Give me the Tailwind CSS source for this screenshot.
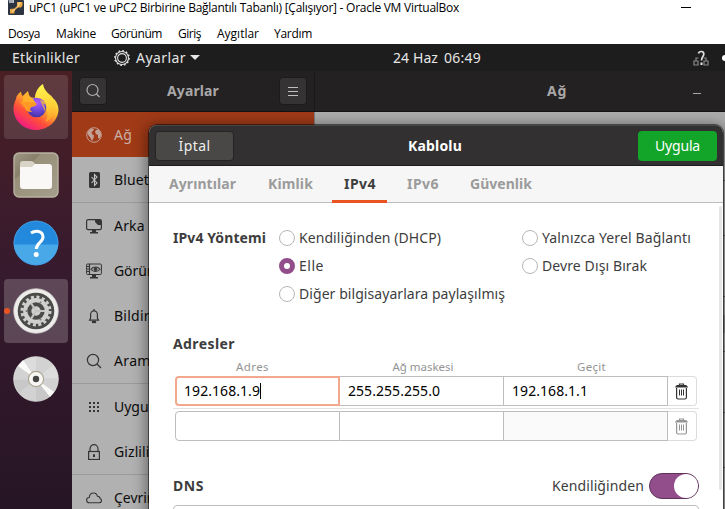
<!DOCTYPE html>
<html lang="tr">
<head>
<meta charset="utf-8">
<title>uPC1 - Oracle VM VirtualBox</title>
<script src="https://cdn.jsdelivr.net/npm/@tailwindcss/browser@4"></script>
</head>
<body class="w-[725px] h-[509px] overflow-hidden bg-white">
<div class="relative flex flex-col w-[725px] h-[509px] overflow-hidden whitespace-nowrap font-['Noto_Sans',sans-serif] text-[14px] leading-[20px]">

  <!-- Host window title and menu -->
  <header class="shrink-0 h-[44px] bg-white text-black font-['Open_Sans',sans-serif] text-[12px] leading-[16px]">
    <div class="flex h-[24px] pl-[8px]">
      <svg class="w-[16px] h-[15px] shrink-0" viewBox="0 0 16 15"><rect width="16" height="15" rx="1" fill="#2b3440"/><path d="M1 0h5v3H1z" fill="#c4cbd4"/><path d="M2 0v3M4 0v3" stroke="#66707c" stroke-width=".7"/><path d="M14.500 2H9v4L6.500 8.500 2 9v4.500h4.500v-3L10 7.500h3l1.500-2z" fill="#e9a443"/><path d="M10 2.500h4l-2 1.500-1 2.500-3 2-2 3H3L5.500 9.500 8 8.500l1.500-2z" fill="#f8cf83"/></svg>
      <span class="ml-[5px]" data-w="430">uPC1 (uPC1 ve uPC2 Birbirine Bağlantılı Tabanlı) [Çalışıyor] - Oracle VM VirtualBox</span>
      <i class="block ml-auto mr-[34px] mt-[7px] w-[10px] h-px bg-black"></i>
    </div>
    <nav class="flex h-[20px] pl-[8px] pt-[2px]">
      <span class="w-[48px]"><span data-w="32">Dosya</span></span>
      <span class="w-[55px]"><span data-w="40">Makine</span></span>
      <span class="w-[67px]"><span data-w="51">Görünüm</span></span>
      <span class="w-[39px]"><span data-w="23">Giriş</span></span>
      <span class="w-[57px]"><span data-w="42">Aygıtlar</span></span>
      <span data-w="38">Yardım</span>
    </nav>
  </header>

  <!-- GNOME top bar -->
  <div class="shrink-0 flex items-center h-[27px] pl-[12px] pr-0 bg-[#1d1d1d] text-[#e6e6e6]">
    <span data-w="68">Etkinlikler</span>
    <svg class="ml-[34px] w-[16px] h-[16px]" viewBox="0 0 16 16" fill="none" stroke="#e2e2e2"><circle cx="8" cy="8" r="7.200" stroke-width="1.400" stroke-dasharray="1.700 2.070"/><circle cx="8" cy="8" r="6.500" stroke-width="1.100"/><circle cx="8" cy="8" r="4.400" stroke-width="1.100"/></svg>
    <span class="ml-[6px]" data-w="50">Ayarlar</span>
    <svg class="ml-[4px] w-[10px] h-[5px]" viewBox="0 0 10 5"><path d="M0 0h10L5 5z" fill="#e6e6e6"/></svg>
    <span class="ml-[193px]" data-w="45">24 Haz</span>
    <span class="ml-[6px]" data-w="37">06:49</span>
    <svg class="ml-auto w-[16px] h-[16px]" viewBox="0 0 16 16" fill="none"><path d="M1 11h4v4H1zM11 11h4v4h-4zM3 11V8h2.500M13 11V8h-2.500" stroke="#8a8a8a" stroke-width="1.200"/><path d="M5.500 3.500C6 .8 10.800.7 10.800 3.900 10.800 6.500 8.500 6.500 8.500 10.500" stroke="#e0e0e0" stroke-width="1.700"/><rect x="7.500" y="12.500" width="2" height="2.500" fill="#eee"/></svg>
    <i class="block ml-[13px] w-[3px] h-[6px] rounded-l-full bg-white"></i>
  </div>

  <div class="flex flex-1 min-h-0">
    <!-- Dock -->
    <aside class="relative shrink-0 w-[72px] flex flex-col gap-[4px] pt-[4px] px-[4px] bg-linear-to-b from-[#4a2024] via-[#371a2e] via-45% to-[#261525]">
      <div class="shrink-0 size-[64px] rounded-[4px] bg-white/12 flex items-center justify-center">
        <svg class="w-[46px] h-[48px]" viewBox="0 0 46 48">
          <defs>
            <linearGradient id="fa" x1=".85" y1=".1" x2=".2" y2=".95"><stop offset="0" stop-color="#fff04a"/><stop offset=".35" stop-color="#ffb02e"/><stop offset=".65" stop-color="#ff5038"/><stop offset="1" stop-color="#f0148c"/></linearGradient>
            <radialGradient id="fb" cx=".55" cy=".25" r=".8"><stop offset="0" stop-color="#b25cf8"/><stop offset=".5" stop-color="#7049dd"/><stop offset="1" stop-color="#3f2f9c"/></radialGradient>
            <linearGradient id="fc" x1=".5" y1="0" x2=".6" y2="1"><stop offset="0" stop-color="#fff44f"/><stop offset=".6" stop-color="#ffcf36"/><stop offset="1" stop-color="#ff9a2c"/></linearGradient>
          </defs>
          <path d="M3 16C3 13 6 10 8 8.500c.2 2 .8 3.500 1.700 4.500L15 8c.2 2.500 1 5 3 6.500L41 16c3 3 4.500 7 4.500 11C45 38 35 47 23 47S.5 37.500.5 26c0-4 1-7 2.500-10z" fill="url(#fa)"/>
          <path d="M22 15C22 9 26 3 30 1c.5 4 3 7.500 6.500 10.500C41 15 43 19 42.500 25c-.8 8-5 12-10 14 3-5 2-12 0-15-3-5-10-4-10.500-9z" fill="url(#fc)"/>
          <circle cx="23.500" cy="24.500" r="9.800" fill="url(#fb)"/>
          <path d="M7 19c5-2 10-1 12.500 0 3 1 4.500 1 4 2.500-.5 2-5 2-6 3.500-1 2 0 3 2 4-4 .5-6-1-7-3-1-2-3-4-5.500-7z" fill="#ff9a25"/>
          <path d="M10 15c1.500-2 3-4 5-6 .2 2 1 4 3 5.500 2 1 3 3 5 6-4-1.500-8-2-13-1.500z" fill="#ffb12c"/>
          <path d="M27 17c4 0 6 3 6 5-1-.8-2-1-3-1 2 2 2.500 5 2 8" fill="#ffc536" opacity=".7"/>
        </svg>
      </div>
      <div class="shrink-0 size-[64px] flex items-center justify-center">
        <svg class="size-[46px]" viewBox="0 0 46 46"><defs><linearGradient id="fl" x1="0" y1="0" x2="1" y2="1"><stop offset="0" stop-color="#a09985"/><stop offset=".3" stop-color="#877f6a"/><stop offset=".32" stop-color="#989079"/><stop offset="1" stop-color="#a59e8b"/></linearGradient></defs><rect x="1" y="1" width="44" height="44" rx="5" fill="url(#fl)" stroke="#b9b3a2" stroke-width="1.400"/><path d="M7 12q0-3 3-3h8q2 0 3 1.500L23 13v5H7z" fill="#d8d4c8"/><path d="M7 15h12l3-3h14q3 0 3 3v19q0 3-3 3H10q-3 0-3-3z" fill="#f9f8f6"/></svg>
      </div>
      <div class="shrink-0 size-[64px] flex items-center justify-center">
        <svg class="size-[46px]" viewBox="0 0 46 46"><circle cx="23" cy="23" r="22.300" fill="#2389dd"/><path d="M.8 24.500a22.300 22.300 0 0 0 44.400 0z" fill="#48a8e8"/><circle cx="23" cy="23" r="22" fill="none" stroke="#4ba3e4" stroke-width=".8"/><path d="M18 13c4.500-3 12-2.500 12 4 0 5.500-6.700 6-6.700 12" fill="none" stroke="#fff" stroke-width="3"/><circle cx="23.200" cy="34.500" r="2.500" fill="#fff"/></svg>
      </div>
      <div class="shrink-0 size-[64px] rounded-[4px] bg-white/20 flex items-center justify-center relative">
        <i class="absolute left-0 top-[29px] size-[6px] rounded-full bg-[#ea5420]"></i>
        <svg class="size-[46px]" viewBox="0 0 46 46"><circle cx="23" cy="23" r="22.300" fill="#eeecea" stroke="#d2d0ce" stroke-width=".7"/><circle cx="23" cy="23" r="18.300" fill="#4b4b49"/><circle cx="23" cy="23" r="14" fill="none" stroke="#cfcfcd" stroke-width="3" stroke-dasharray="3 2.498"/><circle cx="23" cy="23" r="10.800" fill="none" stroke="#d0d0ce" stroke-width="4.200"/><circle cx="23" cy="23" r="7.500" fill="#4b4b49"/><circle cx="23" cy="23" r="4.700" fill="#d0d0ce"/><path d="M23 23h9M23 23l-5-8M23 23l-5 8" stroke="#c4c4c2" stroke-width="2.200"/><circle cx="27.500" cy="14.500" r="1" fill="#777"/><circle cx="13.500" cy="23" r="1" fill="#777"/><circle cx="27.500" cy="31.500" r="1" fill="#777"/></svg>
      </div>
      <div class="shrink-0 size-[64px] flex items-center justify-center">
        <svg class="size-[46px]" viewBox="0 0 46 46"><circle cx="23" cy="23" r="22.300" fill="#d2d2d2" stroke="#e4e4e2" stroke-width=".8"/><path d="M23 23V1a22 22 0 0 0-14 5zM23 23l22-1A22 22 0 0 0 40 9z" fill="#dcdcdc"/><path d="M23 23V45a22 22 0 0 0 14-5zM23 23L1 24a22 22 0 0 0 5 13z" fill="#c8c8c8"/><path d="M23 23L5 10l5-6zM23 23l18 13-4 5z" fill="#fafaf8"/><circle cx="23" cy="23" r="7.600" fill="#f7f6f3" stroke="#aaa391" stroke-width="1.100"/><circle cx="23" cy="23" r="3.200" fill="#454545"/></svg>
      </div>
    </aside>

    <!-- Settings window -->
    <section class="flex flex-col flex-1 min-w-0">
      <div class="shrink-0 flex h-[41px] bg-[#242122] border-b border-[#151314] text-[#a9a8a8] font-bold">
        <div class="flex items-center w-[243px] border-r border-[#1a1819] pl-[7px] pr-[7px]">
          <div class="size-[28px] rounded-[4px] bg-[#353334] border border-[#1c1a1b] flex items-center justify-center"><svg class="size-[16px]" viewBox="0 0 16 16" fill="none" stroke="#b0afaf" stroke-width="1.200"><circle cx="7.500" cy="7" r="5.500"/><path d="M11.500 11l3 3"/></svg></div>
          <span class="ml-[60px]" data-w="52">Ayarlar</span>
          <div class="ml-auto size-[28px] rounded-[4px] bg-[#353334] border border-[#1c1a1b] flex flex-col gap-[3px] items-center justify-center"><i class="block w-[10px] h-px bg-[#c0c0c0]"></i><i class="block w-[10px] h-px bg-[#c0c0c0]"></i><i class="block w-[10px] h-px bg-[#c0c0c0]"></i></div>
        </div>
        <div class="flex flex-1 items-center pl-[232px]">
          <span data-w="20">Ağ</span>
          <i class="block ml-auto mr-[24px] mt-[5px] w-[8px] h-px bg-[#a9a8a8]"></i>
        </div>
      </div>
      <div class="flex flex-1 min-h-0">
        <div class="w-[243px] border-r border-[#7d7d7d] bg-[#b1b1b1] text-[#0c0c0c] overflow-hidden">
          <div class="flex items-center h-[45px] pl-[14px] bg-[#a03a17] text-[#c9b0a8]"><svg class="size-[16px] mr-[12px]" viewBox="0 0 16 16"><circle cx="8" cy="8" r="7.300" fill="none" stroke="#c3a196" stroke-width="1"/><path d="M2 4.500L5 1.500l3 .5L7 4l-1.500 1L6 7l2 1.500L7.500 11 6 14 4.500 11 3 9 1.500 7zM10 3l2.500-.5L15 6v3l-2 3-1-1.500V8L10 7 9 5z" fill="#c3a196"/></svg><span data-w="18">Ağ</span></div>
          <div class="flex items-center h-[46px] pl-[14px] border-b border-[#9a9a9a]"><svg class="size-[16px] mr-[12px]" viewBox="0 0 16 16"><rect x="3" width="11" height="16" rx="1.500" fill="#353535"/><path d="M5.500 5l5.500 6-2.500 2.500v-11L11 5l-5.500 6" fill="none" stroke="#c5c5c5" stroke-width="1.100"/></svg><span data-w="66">Bluetooth</span></div>
          <div class="flex items-center h-[45px] pl-[14px]"><svg class="size-[16px] mr-[12px]" viewBox="0 0 16 16"><rect x=".6" y="1.600" width="14.800" height="10" rx="1.600" fill="none" stroke="#353535" stroke-width="1.200"/><path d="M9 2h6v5h-3l-3-3zM6 12h4v2h2v1.500H4V14h2z" fill="#353535"/></svg><span data-w="64">Arka Plan</span></div>
          <div class="flex items-center h-[45px] pl-[14px]"><svg class="size-[16px] mr-[12px]" viewBox="0 0 16 16" fill="none" stroke="#353535"><rect x=".6" y="1" width="14.800" height="10.500" rx="1"/><path d="M3.500 1v10.500M1 3.500h2.500M1 6h2.500M1 8.500h2.500" stroke-width="1.200"/><path d="M5 6.200c2-3 7-3 9 0-2 3-7 3-9 0z" stroke-width="1.100"/><circle cx="9.500" cy="6.200" r="1.400" fill="#353535"/><path d="M6 12h4v2h2v1.500H4V14h2z" fill="#353535" stroke="none"/></svg><span data-w="63">Görünüm</span></div>
          <div class="flex items-center h-[45px] pl-[14px]"><svg class="size-[16px] mr-[12px]" viewBox="0 0 16 16" fill="none" stroke="#353535" stroke-width="1.200"><path d="M3.500 12.200L4.600 10V6.500a3.400 3.700 0 0 1 6.800 0V10l1.100 2.200zM8 1v2"/><path d="M6.500 13.500h3v1h-3z"/></svg><span data-w="71">Bildirimler</span></div>
          <div class="flex items-center h-[46px] pl-[14px] border-b border-[#9a9a9a]"><svg class="size-[16px] mr-[12px]" viewBox="0 0 16 16" fill="none" stroke="#353535" stroke-width="1.200"><circle cx="7" cy="7" r="5.600"/><path d="M11 11l4 4"/></svg><span data-w="45">Arama</span></div>
          <div class="flex items-center h-[45px] pl-[14px]"><svg class="size-[16px] mr-[12px]" viewBox="0 0 16 16" fill="#353535"><path d="M3 3h2v2H3zM7 3h2v2H7zM11 3h2v2h-2zM3 7h2v2H3zM7 7h2v2H7zM11 7h2v2h-2zM3 11h2v2H3zM7 11h2v2H7zM11 11h2v2h-2z"/></svg><span data-w="84">Uygulamalar</span></div>
          <div class="flex items-center h-[46px] pl-[14px] border-b border-[#9a9a9a]"><svg class="size-[16px] mr-[12px]" viewBox="0 0 16 16" fill="none" stroke="#353535" stroke-width="1.200"><rect x="2.600" y="7.500" width="10.800" height="8"/><path d="M4 7.500V5a4 4.300 0 0 1 8 0v2.500"/><path d="M8 10.300v2.700" stroke-width="2"/></svg><span data-w="43">Gizlilik</span></div>
          <div class="flex items-center h-[45px] pl-[14px]"><svg class="size-[16px] mr-[12px]" viewBox="0 0 16 16" fill="none" stroke="#353535" stroke-width="1.100"><path d="M3.500 12.800C1.700 12.800.6 11.600.6 10S2 7.500 3.300 7.500C3.500 4.700 5.300 3 7.500 3c2 0 3.500 1.200 3.900 3.200 1.700 0 2.600 1 2.600 2.300 1 .4 1.500 1.200 1.500 2 0 1.400-1 2.300-2.500 2.300z"/></svg><span data-w="122">Çevrimiçi Hesaplar</span></div>
        </div>
        <div class="flex-1 bg-[#acacac] pt-[68px] text-[#666]">
          <div class="h-[55px] border-t border-current"></div>
          <div class="h-[61px] border-t border-current"></div>
          <div class="h-[55px] border-t border-current pt-[18px]"><div class="h-[18px] bg-[#8e8e8e]"></div></div>
          <div class="h-[61px] border-t border-current"></div>
          <div class="h-[55px] border-t border-current"></div>
          <div class="h-[42px] border-t border-current"></div>
        </div>
      </div>
    </section>
  </div>

  <!-- Connection dialog, over the settings window -->
  <div class="absolute left-[149px] top-[125px] w-[574px] h-[400px] flex flex-col rounded-t-[8px] overflow-hidden bg-white text-[#3d3d3d] shadow-[0_0_0_1px_rgba(0,0,0,0.5),0_3px_14px_3px_rgba(0,0,0,0.42)]">
    <div class="shrink-0 flex items-center h-[41px] pl-[6px] pr-[6px] bg-[#323030] border-t border-t-[#484747] border-b border-b-[#1c1b1b] text-white">
      <div class="flex items-center justify-center w-[79px] h-[30px] rounded-[4px] bg-[#494846] border border-[#252424] text-[#eeeeec]"><span data-w="32">İptal</span></div>
      <span class="ml-[174px] font-bold" data-w="54">Kablolu</span>
      <div class="ml-auto flex items-center justify-center w-[79px] h-[30px] rounded-[4px] bg-[#13a42a]"><span data-w="45">Uygula</span></div>
    </div>
    <div class="shrink-0 flex h-[37px] pl-[8px] bg-[#f6f6f6] border-b border-[#bdbdbd] font-bold text-[#9b9b9b] leading-[36px]">
      <span class="w-[99px] pl-[12px]"><span data-w="67">Ayrıntılar</span></span>
      <span class="w-[76px] pl-[12px]"><span data-w="45">Kimlik</span></span>
      <span class="w-[55px] pl-[12px] h-[37px] border-b-[3px] border-[#e95420] text-[#3d3d3d]"><span data-w="32">IPv4</span></span>
      <span class="w-[71px] pl-[20px]"><span data-w="32">IPv6</span></span>
      <span class="pl-[12px]"><span data-w="62">Güvenlik</span></span>
    </div>
    <div class="relative flex-1 pl-[24px] pr-[24px] pt-[21px]">
      <i class="absolute right-[1px] top-[3px] w-[3px] h-[284px] rounded-full bg-[#e6e6e6]"></i>
      <div class="flex h-[84px]">
        <div class="w-[106px] font-bold leading-[28px]"><span data-w="93">IPv4 Yöntemi</span></div>
        <div class="w-[243px] flex flex-col">
          <label class="flex items-center h-[28px] gap-[4px]"><i class="block size-[16px] rounded-full border border-[#b6b6b6] bg-white"></i><span data-w="142">Kendiliğinden (DHCP)</span></label>
          <label class="flex items-center h-[28px] gap-[4px]"><i class="block size-[16px] rounded-full border-[5px] border-[#924d8b] bg-white"></i><span data-w="25">Elle</span></label>
          <label class="flex items-center h-[28px] gap-[4px]"><i class="block size-[16px] rounded-full border border-[#b6b6b6] bg-white"></i><span data-w="206">Diğer bilgisayarlara paylaşılmış</span></label>
        </div>
        <div class="flex flex-col">
          <label class="flex items-center h-[28px] gap-[4px]"><i class="block size-[16px] rounded-full border border-[#b6b6b6] bg-white"></i><span data-w="149">Yalnızca Yerel Bağlantı</span></label>
          <label class="flex items-center h-[28px] gap-[4px]"><i class="block size-[16px] rounded-full border border-[#b6b6b6] bg-white"></i><span data-w="105">Devre Dışı Bırak</span></label>
        </div>
      </div>
      <h2 class="mt-[26px] h-[24px] font-bold"><span data-w="62">Adresler</span></h2>
      <div class="flex h-[18px] pl-[2px] text-[11.500px] leading-[18px] text-[#949494] text-center">
        <span class="w-[155px]"><span data-w="33">Adres</span></span>
        <span class="w-[182px] pl-[4px]"><span data-w="61">Ağ maskesi</span></span>
        <span class="w-[159px]"><span data-w="29">Geçit</span></span>
      </div>
      <div class="flex h-[30px] ml-[2px] text-black leading-[28px]">
        <div class="flex items-center w-[165px] border-2 border-[#f3a78d] rounded-l-[4px] pl-[7px]"><span data-w="76">192.168.1.9</span><i class="block w-px h-[16px] bg-black"></i></div>
        <div class="w-[164px] border-y border-r border-[#bdbdbd] pl-[8px]"><span data-w="92">255.255.255.0</span></div>
        <div class="w-[164px] border-y border-r border-[#bdbdbd] pl-[8px]"><span data-w="76">192.168.1.1</span></div>
        <div class="flex items-center w-[29px] border-y border-r border-[#dcdcdc] rounded-r-[4px] pl-[7px] text-[#333]"><svg class="w-[13px] h-[17px]" viewBox="0 0 13 17" fill="none" stroke="currentColor"><path d="M4.500 2.500V1h4v1.500" stroke-width="1.200"/><path d="M0 4.500q.5-2 2-2.500h9q1.500.500 2 2.500z" fill="currentColor" stroke="none"/><path d="M1.600 5v9.500q0 1.500 1.500 1.500h6.800q1.500 0 1.500-1.500V5" stroke-width="1.200"/><path d="M4.500 6.500v6M6.500 6.500v6M8.500 6.500v6"/></svg></div>
      </div>
      <i class="block w-[526px] h-px mt-[2px] mb-[2px] bg-[#e2e2e2]"></i>
      <div class="flex h-[30px] ml-[2px]">
        <div class="w-[165px] border border-[#bdbdbd] rounded-l-[4px]"></div>
        <div class="w-[164px] border-y border-r border-[#bdbdbd]"></div>
        <div class="w-[164px] border-y border-r border-[#bdbdbd] bg-[#fafafa]"></div>
        <div class="flex items-center w-[29px] border-y border-r border-[#dcdcdc] rounded-r-[4px] pl-[7px] text-[#969696]"><svg class="w-[13px] h-[17px]" viewBox="0 0 13 17" fill="none" stroke="currentColor"><path d="M4.500 2.500V1h4v1.500" stroke-width="1.200"/><path d="M0 4.500q.5-2 2-2.500h9q1.500.500 2 2.500z" fill="currentColor" stroke="none"/><path d="M1.600 5v9.500q0 1.500 1.500 1.500h6.800q1.500 0 1.500-1.500V5" stroke-width="1.200"/><path d="M4.500 6.500v6M6.500 6.500v6M8.500 6.500v6"/></svg></div>
      </div>
      <div class="flex items-center h-[26px] mt-[32px] w-[526px]">
        <span class="font-bold" data-w="31">DNS</span>
        <span class="ml-auto mr-[5px]" data-w="92">Kendiliğinden</span>
        <div class="flex justify-end w-[50px] h-[26px] rounded-full bg-[#924d8b] border border-[#5e3259]"><i class="block w-[24px] h-[24px] rounded-full bg-white"></i></div>
      </div>
      <div class="mt-[6px] w-[526px] h-[30px] border border-[#bdbdbd] rounded-[4px]"></div>
    </div>
  </div>
</div>
<script>
  // Fit each label to its column width by spreading the difference over its letters.
  function fitLabels() {
    document.querySelectorAll('[data-w]').forEach(function (el) {
      el.classList.add('inline-block');
      el.style.letterSpacing = '0px';
      var natural = el.getBoundingClientRect().width;
      el.style.letterSpacing = ((el.dataset.w - natural) / el.textContent.length) + 'px';
    });
  }
  fitLabels();
  document.fonts.ready.then(fitLabels);
  window.addEventListener('load', function () {
    fitLabels();
    requestAnimationFrame(fitLabels);
    setTimeout(fitLabels, 50);
  });
</script>
</body>
</html>
